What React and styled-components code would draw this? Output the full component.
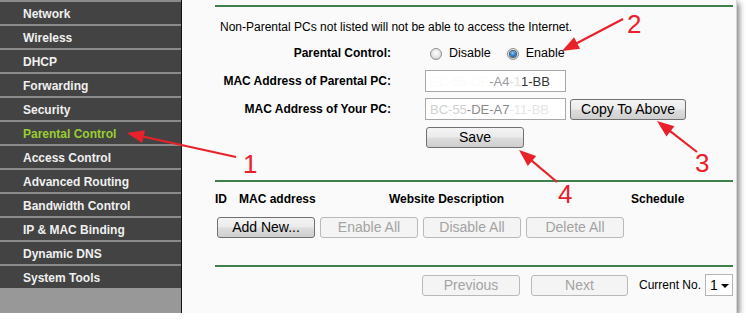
import React from "react";
import styled, { createGlobalStyle, css } from "styled-components";

const Global = createGlobalStyle`
  html, body { margin: 0; padding: 0; background: #ffffff; }
  body { font-family: "Liberation Sans", Arial, sans-serif; }
`;

const Frame = styled.div`
  position: relative;
  width: 737px;
  height: 313px;
  display: flex;
  box-shadow: 2px 3px 6px rgba(0, 0, 0, 0.55);
  overflow: visible;
`;

const Sidebar = styled.nav`
  width: 181px;
  border-right: 1px solid #111;
  background: #989898;
  display: flex;
  flex-direction: column;
`;

const MenuItem = styled.div`
  box-sizing: border-box;
  height: 24px;
  border-top: 2px solid #8c8c8c;
  background: #434343;
  display: flex;
  align-items: center;
  padding: 1px 0 0 23px;
  font: bold 12px "Liberation Sans", Arial, sans-serif;
  color: ${(p) => (p.$active ? "#9acd32" : "#f0f0f0")};
`;

const Content = styled.main`
  flex: 1;
  background: #fafafa;
  border-right: 1px solid #d6d6d6;
  padding: 5px 3px 0 33px;
  display: flex;
  flex-direction: column;
  font-size: 12px;
  color: #000;
`;

const Rule = styled.div`
  height: 2px;
  background: #3f7f4a;
  margin-top: ${(p) => p.$top || 0}px;
`;

const Notice = styled.p`
  margin: 13px 0 0 5px;
  line-height: 14px;
  font-size: 12px;
`;

const FormGrid = styled.div`
  margin-top: 8px;
  display: grid;
  grid-template-columns: 176px auto;
  column-gap: 34px;
  row-gap: 6px;
  grid-auto-rows: 22px;
  align-items: center;
`;

const Label = styled.div`
  font-weight: bold;
  font-size: 12px;
  text-align: right;
`;

const Controls = styled.div`
  display: flex;
  align-items: center;
  gap: ${(p) => p.$gap || 0}px;
`;

const RadioGroup = styled.label`
  display: flex;
  align-items: center;
  gap: 7px;
  margin-left: ${(p) => p.$ml || 0}px;
  font-size: 12.5px;
`;

const RadioDot = styled.span`
  width: 10px;
  height: 10px;
  border-radius: 50%;
  border: 1px solid #8d8f90;
  background: radial-gradient(circle at 50% 40%, #ffffff 0%, #e4e4e4 55%, #c4c4c4 100%);
  display: inline-flex;
  align-items: center;
  justify-content: center;
  margin-top: 2px;
  ${(p) =>
    p.$checked &&
    css`
      &::after {
        content: "";
        width: 6px;
        height: 6px;
        border-radius: 50%;
        background: radial-gradient(circle at 45% 35%, #8fd0ff 0%, #2a7fcc 50%, #0c3f78 100%);
        box-shadow: 0 0 0 1px #4a5866;
      }
    `}
`;

const MacField = styled.div`
  box-sizing: border-box;
  width: 141px;
  height: 22px;
  border: 1px solid #a8a8a8;
  background: #fff;
  display: flex;
  align-items: center;
  padding-left: 4px;
  font-size: 13px;
  white-space: nowrap;
  overflow: hidden;
`;

const Mac = styled.span`
  color: ${(p) => p.$c};
`;

const Button = styled.button`
  box-sizing: border-box;
  height: 21px;
  width: ${(p) => p.$w || 98}px;
  padding: 0;
  border-radius: 3px;
  font: 14px "Liberation Sans", Arial, sans-serif;
  line-height: 19px;
  margin-left: ${(p) => p.$ml || 0}px;
  border: 1px solid #707070;
  color: #000;
  background: linear-gradient(#f4f4f4 0%, #ebebeb 48%, #dddddd 52%, #cfcfcf 100%);
  ${(p) =>
    p.disabled &&
    css`
      border-color: #b7b9bb;
      color: #a3a3a3;
      background: #f4f4f4;
    `}
`;

const HeaderRow = styled.div`
  margin-top: 10px;
  display: grid;
  grid-template-columns: 24px 150px 242px auto;
  font-weight: bold;
  font-size: 12px;
  line-height: 14px;
`;

const ButtonRow = styled.div`
  margin: 11px 0 0 2px;
  display: flex;
  gap: 5px;
`;

const Pager = styled.div`
  margin-top: 7px;
  display: flex;
  align-items: center;
  justify-content: flex-end;
  height: 22px;
`;

const PagerText = styled.span`
  margin-left: 11px;
  margin-right: 4px;
  font-size: 12px;
`;

const Select = styled.div`
  box-sizing: border-box;
  width: 28px;
  height: 22px;
  border: 1px solid #b4b4b4;
  background: #fff;
  display: flex;
  align-items: center;
  justify-content: space-between;
  padding: 0 3px 0 4px;
  font-size: 14px;
  &::after {
    content: "";
    border-left: 4px solid transparent;
    border-right: 4px solid transparent;
    border-top: 4px solid #000;
    margin-top: 2px;
  }
`;

const Overlay = styled.svg`
  position: absolute;
  left: 0;
  top: 0;
  width: 746px;
  height: 322px;
  pointer-events: none;
  overflow: visible;
`;

const RED = "#e8212b";

function Arrow({ from, to }) {
  const [sx, sy] = from;
  const [tx, ty] = to;
  const dx = tx - sx;
  const dy = ty - sy;
  const len = Math.hypot(dx, dy);
  const ux = dx / len;
  const uy = dy / len;
  const L = 17;
  const W = 6.5;
  const bx = tx - ux * L;
  const by = ty - uy * L;
  const px = -uy;
  const py = ux;
  const pts = `${tx},${ty} ${bx + px * W},${by + py * W} ${bx - px * W},${by - py * W}`;
  return (
    <g>
      <line x1={sx} y1={sy} x2={bx + ux * 2} y2={by + uy * 2} stroke={RED} strokeWidth="2.2" />
      <polygon points={pts} fill={RED} />
    </g>
  );
}

const menu = [
  "Network",
  "Wireless",
  "DHCP",
  "Forwarding",
  "Security",
  "Parental Control",
  "Access Control",
  "Advanced Routing",
  "Bandwidth Control",
  "IP & MAC Binding",
  "Dynamic DNS",
  "System Tools",
];

export default function App() {
  return (
    <>
      <Global />
      <Frame>
        <Sidebar>
          {menu.map((m) => (
            <MenuItem key={m} $active={m === "Parental Control"}>
              {m}
            </MenuItem>
          ))}
        </Sidebar>
        <Content>
          <Rule />
          <Notice>Non-Parental PCs not listed will not be able to access the Internet.</Notice>
          <FormGrid>
            <Label>Parental Control:</Label>
            <Controls>
              <RadioGroup $ml={5}>
                <RadioDot />
                Disable
              </RadioGroup>
              <RadioGroup $ml={16}>
                <RadioDot $checked />
                Enable
              </RadioGroup>
            </Controls>
            <Label>MAC Address of Parental PC:</Label>
            <Controls>
              <MacField>
                <Mac $c="#fbfbfb">EC-55-DE</Mac>
                <Mac $c="#9a9a9a">-A4</Mac>
                <Mac $c="#e0e0e0">-1</Mac>
                <Mac $c="#333">1-BB</Mac>
              </MacField>
            </Controls>
            <Label>MAC Address of Your PC:</Label>
            <Controls $gap={4}>
              <MacField>
                <Mac $c="#d0d0d0">BC-55</Mac>
                <Mac $c="#8a8a8a">-DE-A7</Mac>
                <Mac $c="#e6e6e6">-11-BB</Mac>
              </MacField>
              <Button $w={116}>Copy To Above</Button>
            </Controls>
            <span />
            <Controls>
              <Button $ml={1}>Save</Button>
            </Controls>
          </FormGrid>
          <Rule $top={32} />
          <HeaderRow>
            <span>ID</span>
            <span>MAC address</span>
            <span>Website Description</span>
            <span>Schedule</span>
          </HeaderRow>
          <ButtonRow>
            <Button>Add New...</Button>
            <Button disabled>Enable All</Button>
            <Button disabled>Disable All</Button>
            <Button disabled>Delete All</Button>
          </ButtonRow>
          <Rule $top={27} />
          <Pager>
            <Button disabled>Previous</Button>
            <Button disabled $w={97} $ml={11}>
              Next
            </Button>
            <PagerText>Current No.</PagerText>
            <Select>1</Select>
          </Pager>
        </Content>
        <Overlay viewBox="0 0 746 322">
          <Arrow from={[236, 157]} to={[127, 133]} />
          <Arrow from={[623, 19]} to={[562, 51]} />
          <Arrow from={[697, 152]} to={[657, 121]} />
          <Arrow from={[557, 182]} to={[519, 150]} />
          <g fill={RED} fontFamily="Liberation Sans, Arial, sans-serif" fontSize="26">
            <text x="243" y="173">1</text>
            <text x="627" y="33">2</text>
            <text x="695" y="172">3</text>
            <text x="558" y="203">4</text>
          </g>
        </Overlay>
      </Frame>
    </>
  );
}
